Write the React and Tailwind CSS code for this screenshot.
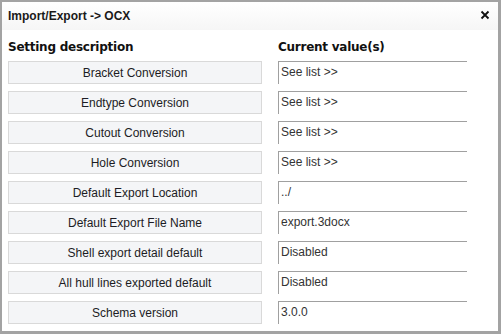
import React from 'react';

const rows = [
  { label: 'Bracket Conversion', value: 'See list >>' },
  { label: 'Endtype Conversion', value: 'See list >>' },
  { label: 'Cutout Conversion', value: 'See list >>' },
  { label: 'Hole Conversion', value: 'See list >>' },
  { label: 'Default Export Location', value: '../' },
  { label: 'Default Export File Name', value: 'export.3docx' },
  { label: 'Shell export detail default', value: 'Disabled' },
  { label: 'All hull lines exported default', value: 'Disabled' },
  { label: 'Schema version', value: '3.0.0' },
];

export default function App() {
  return (
    <div
      className="w-[501px] h-[334px] bg-white border-l-[2px] border-t-[2px] border-r-[3px] border-b-[3px] border-[#a3a3a3] flex flex-col overflow-hidden"
      style={{ fontFamily: '"Liberation Sans", Arial, sans-serif' }}
    >
      {/* Title bar */}
      <div className="h-[28px] shrink-0 flex items-center justify-between pl-[6px] pr-[8px] bg-gradient-to-b from-white to-[#f6f6f6]">
        <span className="text-[12px] font-bold text-[#1a1a1a]">Import/Export -&gt; OCX</span>
        <svg width="10" height="10" viewBox="0 0 10 10" className="-mt-[2px]">
          <path d="M1.5 1.5 L8.5 8.5 M8.5 1.5 L1.5 8.5" stroke="#111" strokeWidth="1.8" />
        </svg>
      </div>

      {/* Body */}
      <div className="flex flex-col pl-[6px] pt-[5px]">
        <div className="flex h-[23px] items-center font-['DejaVu_Sans',sans-serif] text-[12px] font-bold tracking-[-0.25px] text-[#111]">
          <span className="w-[270px]">Setting description</span>
          <span>Current value(s)</span>
        </div>

        <div className="flex flex-col gap-[7px] mt-[3px]">
          {rows.map((row) => (
            <div key={row.label} className="flex h-[23px]">
              <div className="w-[254px] h-full bg-[#f4f5f7] border border-[#d9d9d9] flex items-center justify-center text-[12px] text-[#1c1c24]">
                {row.label}
              </div>
              <div className="ml-[16px] w-[189px] h-full border-t border-l border-[#a0a0a0] pl-[2px] pt-[3px] text-[12px] text-[#333] leading-[14px]">
                {row.value}
              </div>
            </div>
          ))}
        </div>
      </div>
    </div>
  );
}
